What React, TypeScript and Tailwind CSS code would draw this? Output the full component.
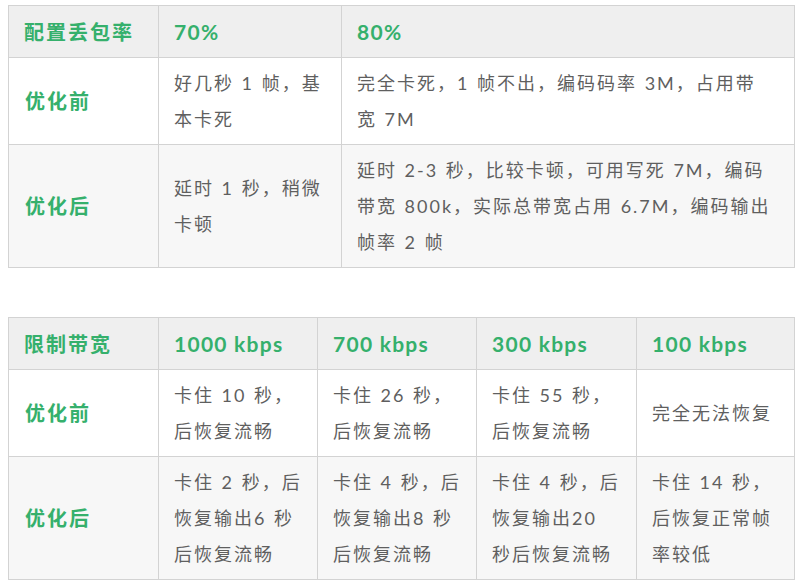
import React from "react";

const font = { fontFamily: '"Lato", "Noto Sans CJK SC", sans-serif' };

type Cell = string[];

function HeadCell({ children }: { children: React.ReactNode }) {
  return (
    <th className="border border-[#d3d3d3] bg-[#efefef] pl-[15px] pr-2 text-left align-middle text-[20px] font-bold tracking-[0.1em] text-[#35b06c] whitespace-nowrap">
      {children}
    </th>
  );
}

function HeadNum({ children }: { children: React.ReactNode }) {
  return (
    <th className="border border-[#d3d3d3] bg-[#efefef] pl-[15px] pr-1 text-left align-middle text-[21px] font-bold tracking-[0.06em] text-[#35b06c] whitespace-nowrap">
      {children}
    </th>
  );
}

function Label({ children }: { children: React.ReactNode }) {
  return (
    <td className="border border-[#d3d3d3] pl-[16px] align-middle text-[20px] font-bold tracking-[0.1em] text-[#35b06c] whitespace-nowrap">
      {children}
    </td>
  );
}

function Body({ lines }: { lines: Cell }) {
  return (
    <td className="border border-[#d3d3d3] pl-[15px] pr-1 align-middle text-[18px] leading-[36px] tracking-[2px] [word-spacing:1px] text-[#5f5f5f] whitespace-nowrap">
      {lines.map((l, i) => (
        <div key={i}>{l}</div>
      ))}
    </td>
  );
}

export default function App() {
  return (
    <div className="bg-white w-[800px] h-[587px] pt-[5px] pl-[8px]" style={font}>
      <table className="table-fixed border-collapse w-[786px]">
        <colgroup>
          <col className="w-[150px]" />
          <col className="w-[183px]" />
          <col className="w-[453px]" />
        </colgroup>
        <thead>
          <tr className="h-[52px]">
            <HeadCell>配置丢包率</HeadCell>
            <HeadNum>70%</HeadNum>
            <HeadNum>80%</HeadNum>
          </tr>
        </thead>
        <tbody>
          <tr className="h-[87px] bg-white">
            <Label>优化前</Label>
            <Body lines={["好几秒 1 帧，基", "本卡死"]} />
            <Body lines={["完全卡死，1 帧不出，编码码率 3M，占用带", "宽 7M"]} />
          </tr>
          <tr className="h-[123px] bg-[#f7f7f7]">
            <Label>优化后</Label>
            <Body lines={["延时 1 秒，稍微", "卡顿"]} />
            <Body
              lines={[
                "延时 2-3 秒，比较卡顿，可用写死 7M，编码",
                "带宽 800k，实际总带宽占用 6.7M，编码输出",
                "帧率 2 帧",
              ]}
            />
          </tr>
        </tbody>
      </table>

      <div className="h-[49px]" />

      <table className="table-fixed border-collapse w-[786px]">
        <colgroup>
          <col className="w-[150px]" />
          <col className="w-[159px]" />
          <col className="w-[159px]" />
          <col className="w-[160px]" />
          <col className="w-[158px]" />
        </colgroup>
        <thead>
          <tr className="h-[52px]">
            <HeadCell>限制带宽</HeadCell>
            <HeadNum>1000 kbps</HeadNum>
            <HeadNum>700 kbps</HeadNum>
            <HeadNum>300 kbps</HeadNum>
            <HeadNum>100 kbps</HeadNum>
          </tr>
        </thead>
        <tbody>
          <tr className="h-[87px] bg-white">
            <Label>优化前</Label>
            <Body lines={["卡住 10 秒，", "后恢复流畅"]} />
            <Body lines={["卡住 26 秒，", "后恢复流畅"]} />
            <Body lines={["卡住 55 秒，", "后恢复流畅"]} />
            <Body lines={["完全无法恢复"]} />
          </tr>
          <tr className="h-[123px] bg-[#f7f7f7]">
            <Label>优化后</Label>
            <Body lines={["卡住 2 秒，后", "恢复输出6 秒", "后恢复流畅"]} />
            <Body lines={["卡住 4 秒，后", "恢复输出8 秒", "后恢复流畅"]} />
            <Body lines={["卡住 4 秒，后", "恢复输出20", "秒后恢复流畅"]} />
            <Body lines={["卡住 14 秒，", "后恢复正常帧", "率较低"]} />
          </tr>
        </tbody>
      </table>
    </div>
  );
}
